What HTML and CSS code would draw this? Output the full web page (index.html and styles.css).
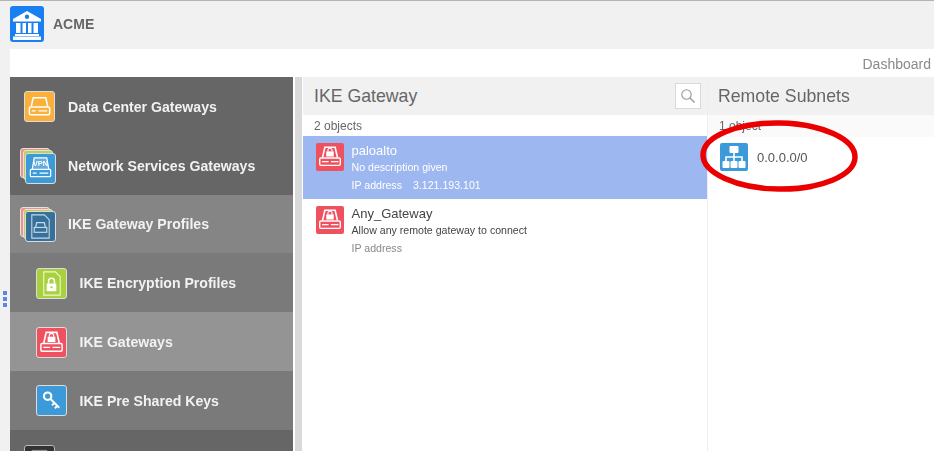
FILE: index.html
```html
<!DOCTYPE html>
<html lang="en">
<head>
<meta charset="utf-8">
<title>ACME</title>
<link rel="stylesheet" href="styles.css">
</head>
<body>
<svg class="defs" width="0" height="0" aria-hidden="true">
  <defs>
    <g id="drive">
      <path d="M6.500 15 8.500 6h13l2 9" fill="none" stroke="#fff" stroke-width="1.500"/>
      <rect x="4.500" y="15.500" width="21" height="8" rx="1.200" fill="none" stroke="#fff" stroke-width="1.500"/>
      <path d="M7 19.500h4M14 19.500h9" stroke="#fff" stroke-width="1.500"/>
    </g>
    <g id="lockdrive">
      <path d="M7 15.500 9.500 4.500h11L23 15.500" fill="none" stroke="#fff" stroke-width="1.700"/>
      <rect x="4" y="16" width="22" height="8" rx="1.200" fill="none" stroke="#fff" stroke-width="1.500"/>
      <path d="M6.500 20h7M16 20h8" stroke="#fff" stroke-width="1.400"/>
      <rect x="11" y="9" width="8" height="5.500" fill="#fff"/>
      <path d="M12.800 9V7.800a2.200 2.200 0 0 1 4.400 0V9" fill="none" stroke="#fff" stroke-width="1.200"/>
    </g>
  </defs>
</svg>

<header class="topbar">
  <span class="logo">
    <svg viewBox="0 0 34 35" width="34" height="35">
      <path d="M17 4 31 12v2.500H3V12z" fill="#fff"/>
      <circle cx="17" cy="9.800" r="2.200" fill="#1a7ff0"/>
      <path d="M6 16h4.500v10H6zM12.500 16h3.500v10h-3.500zM18 16h3.500v10H18zM23.500 16H28v10h-4.500z" fill="#fff"/>
      <path d="M5 27h24v2H5zM3 29.500h28V33H3z" fill="#fff"/>
    </svg>
  </span>
  <span class="brand">ACME</span>
</header>

<div class="shell">
  <div class="handle"><i></i><i></i><i></i></div>
  <div class="content">
    <div class="crumbs">Dashboard</div>
    <div class="columns">
      <nav class="sidebar">
        <a class="nav-item">
          <span class="tile tile-orange"><svg viewBox="0 0 30 30"><use href="#drive"/></svg></span>
          <span>Data Center Gateways</span>
        </a>
        <a class="nav-item">
          <span class="stack">
            <span class="sheet sheet-red"></span><span class="sheet sheet-green"></span>
            <span class="tile tile-blue stack-front"><svg viewBox="0 0 30 30">
              <path d="M6.500 15.500 8.500 4h13l2 11.500" fill="#ffffff30" stroke="#fff" stroke-width="1.300"/>
              <rect x="4.500" y="16" width="21" height="7.500" rx="1" fill="none" stroke="#fff" stroke-width="1.300"/>
              <path d="M7 19.700h4M14 19.700h9" stroke="#fff" stroke-width="1.300"/>
              <text x="15" y="12.500" class="vpn">VPN</text>
            </svg></span>
          </span>
          <span>Network Services Gateways</span>
        </a>
        <a class="nav-item nav-open">
          <span class="stack">
            <span class="sheet sheet-red"></span><span class="sheet sheet-green"></span>
            <span class="tile tile-navy stack-front"><svg viewBox="0 0 30 30">
              <path d="M6 3h13l5 5v19H6z" fill="none" stroke="#c9d8e4" stroke-width="1.100"/>
              <path d="M10 16l1-5h8l1 5" fill="none" stroke="#c9d8e4" stroke-width="1.300"/>
              <rect x="8.500" y="16" width="13" height="5" fill="none" stroke="#c9d8e4" stroke-width="1.200"/>
            </svg></span>
          </span>
          <span>IKE Gateway Profiles</span>
        </a>
        <a class="nav-item nav-sub">
          <span class="tile tile-lime"><svg viewBox="0 0 30 30">
            <path d="M7 3h12l5 5v19H7z" fill="none" stroke="#f1f7d5" stroke-width="1.100"/>
            <rect x="10" y="15" width="10" height="8" fill="#fff"/>
            <path d="M12 15v-2.500a3 3 0 0 1 6 0V15" fill="none" stroke="#fff" stroke-width="1.600"/>
            <circle cx="15" cy="19" r="1.200" fill="#a9d13e"/>
          </svg></span>
          <span>IKE Encryption Profiles</span>
        </a>
        <a class="nav-item nav-sub nav-active">
          <span class="tile tile-red"><svg viewBox="0 0 30 30"><use href="#lockdrive"/></svg></span>
          <span>IKE Gateways</span>
        </a>
        <a class="nav-item nav-sub">
          <span class="tile tile-sky"><svg viewBox="0 0 30 30">
            <circle cx="11" cy="10.500" r="3.800" fill="none" stroke="#fff" stroke-width="2.200"/>
            <path d="M14 13.500 23 22.500M18 17.500l-2.500 2.500M21 20.500l-2.500 2.500" fill="none" stroke="#fff" stroke-width="2"/>
          </svg></span>
          <span>IKE Pre Shared Keys</span>
        </a>
        <a class="nav-item">
          <span class="tile tile-dark"><svg viewBox="0 0 30 30"><path d="M7 4h16v5H7z" fill="#8f8f8f"/></svg></span>
        </a>
      </nav>
      <div class="splitter"></div>
      <section class="panel panel-list">
        <div class="panel-head">
          <h2>IKE Gateway</h2>
          <button class="search" type="button" aria-label="Search">
            <svg viewBox="0 0 16 16" width="16" height="16"><circle cx="6.500" cy="6.500" r="4.700" fill="none" stroke="#999" stroke-width="1.100"/><path d="M10 10l4.500 4.500" stroke="#999" stroke-width="1.400"/></svg>
          </button>
        </div>
        <div class="count">2 objects</div>
        <article class="gateway gateway-selected">
          <span class="badge"><svg viewBox="0 0 30 30"><use href="#lockdrive"/></svg></span>
          <div class="gateway-body">
            <div class="gateway-name">paloalto</div>
            <div class="gateway-desc">No description given</div>
            <div class="gateway-ip"><span>IP address</span><span>3.121.193.101</span></div>
          </div>
        </article>
        <article class="gateway">
          <span class="badge"><svg viewBox="0 0 30 30"><use href="#lockdrive"/></svg></span>
          <div class="gateway-body">
            <div class="gateway-name">Any_Gateway</div>
            <div class="gateway-desc">Allow any remote gateway to connect</div>
            <div class="gateway-ip"><span>IP address</span></div>
          </div>
        </article>
      </section>
      <section class="panel panel-subnets">
        <div class="panel-head"><h2>Remote Subnets</h2></div>
        <div class="count count-tint">1 object</div>
        <div class="subnet">
          <span class="badge badge-sky"><svg viewBox="0 0 28 28">
            <rect x="9.500" y="3" width="9" height="7" rx="1" fill="#fff"/>
            <path d="M14 10v8M6 18v-4h16v4" fill="none" stroke="#fff" stroke-width="1.600"/>
            <rect x="2.500" y="18" width="7" height="7" rx="1" fill="#fff"/>
            <rect x="10.500" y="18" width="7" height="7" rx="1" fill="#fff"/>
            <rect x="18.500" y="18" width="7" height="7" rx="1" fill="#fff"/>
          </svg></span>
          <span>0.0.0.0/0</span>
        </div>
      </section>
    </div>
  </div>
</div>

<svg class="callout" viewBox="0 0 164 78" width="164" height="78" aria-hidden="true">
  <ellipse cx="82" cy="39" rx="76" ry="33" transform="rotate(1 82 39)" fill="none" stroke="#ea0000" stroke-width="5.500"/>
</svg>
</body>
</html>
```

FILE: styles.css
```css
* { box-sizing: border-box; }
html, body {
  margin: 0;
  height: 451px;
  overflow: hidden;
}
body {
  position: relative;
  background: #f1f1f1;
  font-family: "Liberation Sans", Arial, sans-serif;
  color: #555;
  filter: blur(0.35px);
}
.defs { position: absolute; }
.topbar {
  height: 49px;
  border-top: 1px solid #b4b4b4;
  padding: 5px 0 0 10px;
  display: flex;
  align-items: flex-start;
  gap: 9px;
}
.logo {
  width: 34px;
  height: 36px;
  background: #1a7ff0;
  border-radius: 3px;
  display: flex;
  align-items: center;
  justify-content: center;
}
.logo svg { display: block; }
.brand {
  font-size: 14px;
  font-weight: 700;
  color: #666;
  line-height: 36px;
}
.shell {
  display: flex;
  height: 402px;
}
.handle {
  width: 10px;
  display: flex;
  flex-direction: column;
  gap: 2px;
  padding: 242px 0 0 3px;
}
.handle i {
  width: 4px;
  height: 4px;
  background: #5f86e6;
}
.content {
  flex: 1;
  min-width: 0;
  display: flex;
  flex-direction: column;
  background: #fff;
}
.crumbs {
  height: 28px;
  padding: 7px 3px 0 0;
  text-align: right;
  font-size: 14px;
  line-height: 16px;
  color: #8a8a8a;
}
.columns {
  flex: 1;
  display: flex;
  min-height: 0;
}
.sidebar {
  width: 283px;
  flex: none;
  display: grid;
  grid-auto-rows: 58.8px;
  background: #666;
  overflow: hidden;
}
.nav-item {
  display: flex;
  align-items: center;
  padding: 1px 0 0 14px;
  gap: 13px;
  background: #666;
  color: #f2f2f2;
  font-size: 14.100px;
  font-weight: 700;
}
.nav-open { background: #858585; }
.nav-sub {
  background: #7a7a7a;
  padding-left: 25.500px;
}
.nav-active { background: #949494; }
.tile {
  width: 31px;
  height: 31px;
  flex: none;
  display: block;
  border: 1px solid #dcdcdc;
  border-radius: 3px;
}
.tile svg { display: block; width: 29px; height: 29px; }
.tile-orange { background: #fbb03b; }
.tile-blue { background: #3d9ad9; }
.tile-navy { background: #37719b; }
.tile-lime { background: #a9d13e; }
.tile-red { background: #f0515f; }
.tile-sky { background: #3d9ad9; }
.tile-dark { background: #333; border-color: #bbb; margin-top: 2px; }
.stack {
  position: relative;
  width: 35px;
  height: 35px;
  margin: 0 0 0 -4px;
  flex: none;
}
.sheet {
  position: absolute;
  width: 30px;
  height: 30px;
  border-radius: 3px;
  border: 1px solid #e2e2e2;
}
.sheet-red { left: 0; top: 0; background: #f58f8a; }
.sheet-green { left: 3px; top: 2px; background: #b4d64c; }
.stack-front { position: absolute; left: 4.500px; top: 4.500px; }
.vpn {
  font-size: 7.500px;
  font-weight: 700;
  fill: #fff;
  text-anchor: middle;
}
.splitter {
  width: 10px;
  flex: none;
  background: #d9d9d9;
  border-left: 2px solid #fff;
  border-right: 1px solid #fff;
}
.panel {
  min-width: 0;
  display: flex;
  flex-direction: column;
}
.panel-list { width: 404px; flex: none; }
.panel-subnets { flex: 1; border-left: 1px solid #eee; }
.panel-head {
  height: 38px;
  flex: none;
  display: flex;
  align-items: center;
  justify-content: space-between;
  padding: 0 6px 0 11px;
  background: #f1f1f1;
}
.panel-subnets .panel-head { padding-left: 10px; }
.panel-head h2 {
  margin: 0;
  font-size: 17.700px;
  font-weight: 400;
  color: #666;
}
.search {
  width: 26px;
  height: 26px;
  padding: 0;
  background: #fff;
  border: 1px solid #d9d9d9;
  display: flex;
  align-items: center;
  justify-content: center;
}
.count {
  height: 21px;
  flex: none;
  padding: 1px 0 0 11px;
  font-size: 12px;
  line-height: 21px;
  color: #666;
}
.count-tint { background: #fafafa; height: 22px; }
.gateway {
  height: 63px;
  display: flex;
  align-items: flex-start;
  gap: 8px;
  padding: 7px 0 0 12.500px;
  color: #444;
}
.gateway-selected {
  background: #9db7f0;
  color: #fff;
}
.badge {
  width: 28px;
  height: 28px;
  flex: none;
  display: block;
  background: #f0515f;
  border-radius: 2px;
}
.badge svg { display: block; width: 28px; height: 28px; }
.badge-sky { background: #3d9ad9; }
.gateway-name {
  font-size: 13px;
  line-height: 15px;
}
.gateway-desc {
  font-size: 10.600px;
  line-height: 16px;
  margin-top: 1px;
}
.gateway-ip {
  font-size: 10.600px;
  line-height: 16px;
  margin-top: 2px;
  display: flex;
  gap: 11px;
  color: #888;
}
.gateway-selected .gateway-ip { color: #fff; }
.subnet {
  display: flex;
  align-items: center;
  gap: 9px;
  padding: 6px 0 0 12px;
  font-size: 13px;
  color: #555;
}
.callout {
  position: absolute;
  left: 696.500px;
  top: 116.500px;
}
```
